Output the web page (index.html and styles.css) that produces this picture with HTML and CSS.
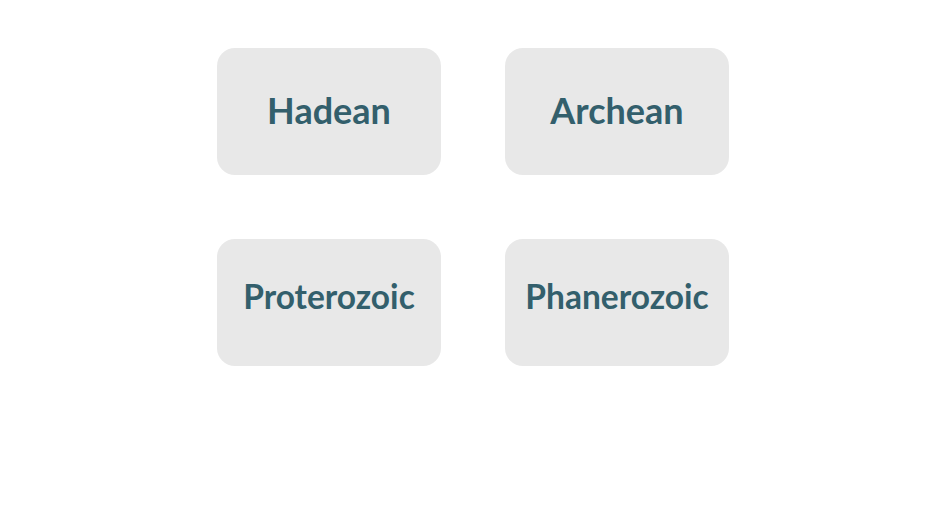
FILE: index.html
```html
<!DOCTYPE html>
<html>
<head>
<meta charset="utf-8">
<link rel="stylesheet" href="styles.css">
</head>
<body>
<div class="grid">
  <div class="card card-short">Hadean</div>
  <div class="card card-short">Archean</div>
  <div class="card card-long">Proterozoic</div>
  <div class="card card-long">Phanerozoic</div>
</div>
</body>
</html>
```
FILE: styles.css
```css
html, body {
  margin: 0;
  padding: 0;
  background: #ffffff;
}
body {
  font-family: Lato, "Liberation Sans", sans-serif;
}
.grid {
  display: grid;
  grid-template-columns: 224px 224px;
  grid-auto-rows: 127px;
  gap: 64px;
  padding: 48px 0 0 217px;
}
.card {
  background: #e8e8e8;
  border-radius: 18px;
  display: flex;
  align-items: center;
  justify-content: center;
  color: #335f6c;
  font-weight: 700;
  line-height: 1;
  box-sizing: border-box;
}
.card-short {
  font-size: 36px;
  padding-bottom: 4px;
}
.card-long {
  font-size: 33.5px;
  padding-bottom: 12px;
}
```
